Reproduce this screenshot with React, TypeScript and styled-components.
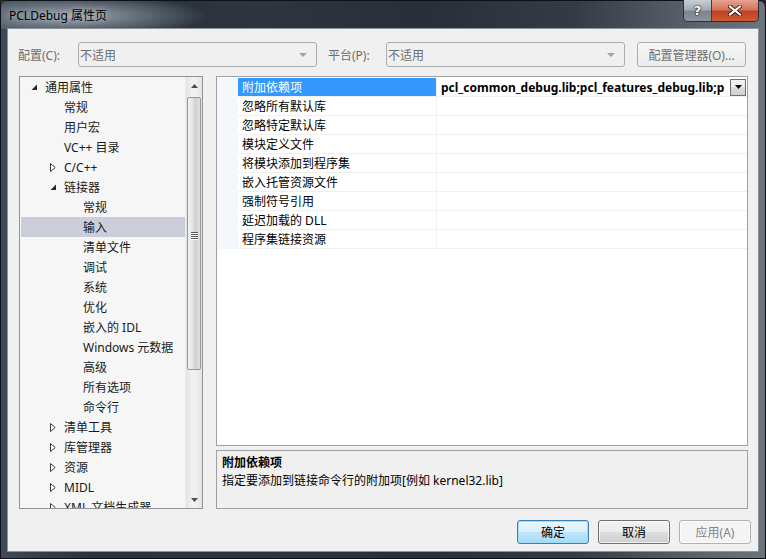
import styled, { createGlobalStyle } from "styled-components";

const GlobalStyle = createGlobalStyle`
  html, body {
    margin: 0;
    padding: 0;
    background: #1f262e;
    overflow: hidden;
  }
  body {
    font-family: "Noto Sans", "Noto Sans CJK SC", sans-serif;
    font-size: 12px;
  }
`;

type TreeItem = {
  label: string;
  level: number;
  exp?: "open" | "closed";
  selected?: boolean;
};

const treeItems: TreeItem[] = [
  { label: "通用属性", level: 0, exp: "open" },
  { label: "常规", level: 1 },
  { label: "用户宏", level: 1 },
  { label: "VC++ 目录", level: 1 },
  { label: "C/C++", level: 1, exp: "closed" },
  { label: "链接器", level: 1, exp: "open" },
  { label: "常规", level: 2 },
  { label: "输入", level: 2, selected: true },
  { label: "清单文件", level: 2 },
  { label: "调试", level: 2 },
  { label: "系统", level: 2 },
  { label: "优化", level: 2 },
  { label: "嵌入的 IDL", level: 2 },
  { label: "Windows 元数据", level: 2 },
  { label: "高级", level: 2 },
  { label: "所有选项", level: 2 },
  { label: "命令行", level: 2 },
  { label: "清单工具", level: 1, exp: "closed" },
  { label: "库管理器", level: 1, exp: "closed" },
  { label: "资源", level: 1, exp: "closed" },
  { label: "MIDL", level: 1, exp: "closed" },
  { label: "XML 文档生成器", level: 1, exp: "closed" },
];

const props = [
  "附加依赖项",
  "忽略所有默认库",
  "忽略特定默认库",
  "模块定义文件",
  "将模块添加到程序集",
  "嵌入托管资源文件",
  "强制符号引用",
  "延迟加载的 DLL",
  "程序集链接资源",
];

const TreeExpander = ({ exp }: { exp?: "open" | "closed" }) => (
  <S.Expander>
    {exp === "open" && (
      <svg width="7" height="7" viewBox="0 0 7 7">
        <polygon points="6,0.5 6,6 0.5,6" fill="#262626" />
      </svg>
    )}
    {exp === "closed" && (
      <svg width="6" height="9" viewBox="0 0 6 9">
        <polygon
          points="0.5,0.5 5.2,4.5 0.5,8.5"
          fill="#fff"
          stroke="#3a3a3a"
          strokeWidth="1"
        />
      </svg>
    )}
  </S.Expander>
);

const ComboArrow = () => (
  <svg width="8" height="4" viewBox="0 0 8 4">
    <polygon points="0,0 8,0 4,4" fill="#a2a2a2" />
  </svg>
);

const App = () => {
  return (
    <>
      <GlobalStyle />
      <S.Window>
        <S.TitleBar>
          <S.Title>PCLDebug 属性页</S.Title>
          <S.Caption>
            <S.HelpBtn>?</S.HelpBtn>
            <S.CloseBtn>
              <svg width="14" height="11" viewBox="0 0 14 11">
                <path
                  d="M2 1.5 L12 9.5 M12 1.5 L2 9.5"
                  stroke="#3a1a14"
                  strokeWidth="4"
                  strokeLinecap="square"
                />
                <path
                  d="M2 1.5 L12 9.5 M12 1.5 L2 9.5"
                  stroke="#fff"
                  strokeWidth="2.2"
                  strokeLinecap="square"
                />
              </svg>
            </S.CloseBtn>
          </S.Caption>
        </S.TitleBar>

        <S.Client>
          <S.Toolbar>
            <S.Label width={60}>配置(C):</S.Label>
            <S.Combo>
              <span>不适用</span>
              <ComboArrow />
            </S.Combo>
            <S.Label width={58} gap={11}>
              平台(P):
            </S.Label>
            <S.Combo>
              <span>不适用</span>
              <ComboArrow />
            </S.Combo>
            <S.ManagerButton>配置管理器(O)...</S.ManagerButton>
          </S.Toolbar>

          <S.Main>
            <S.Tree>
              <S.TreeList>
                {treeItems.map((it, i) => (
                  <S.TreeRow key={i} level={it.level} selected={it.selected}>
                    <TreeExpander exp={it.exp} />
                    <span>{it.label}</span>
                  </S.TreeRow>
                ))}
              </S.TreeList>
              <S.ScrollBar>
                <S.ScrollArrow>
                  <svg width="7" height="4" viewBox="0 0 7 4">
                    <polygon points="0,4 7,4 3.5,0" fill="#4d4d4d" />
                  </svg>
                </S.ScrollArrow>
                <S.Track>
                  <S.Thumb>
                    <S.Grip>
                      <i />
                      <i />
                      <i />
                      <i />
                    </S.Grip>
                  </S.Thumb>
                </S.Track>
                <S.ScrollArrow>
                  <svg width="7" height="4" viewBox="0 0 7 4">
                    <polygon points="0,0 7,0 3.5,4" fill="#4d4d4d" />
                  </svg>
                </S.ScrollArrow>
              </S.ScrollBar>
            </S.Tree>

            <S.RightCol>
              <S.Grid>
                {props.map((p, i) => (
                  <S.GridRow key={i}>
                    <S.Gutter />
                    <S.NameCell selected={i === 0}>{p}</S.NameCell>
                    <S.ValueCell>
                      {i === 0 && (
                        <>
                          <S.ValueText>pcl_common_debug.lib;pcl_features_debug.lib;p</S.ValueText>
                          <S.DropButton>
                            <svg width="7" height="4" viewBox="0 0 7 4">
                              <polygon points="0,0 7,0 3.5,4" fill="#000" />
                            </svg>
                          </S.DropButton>
                        </>
                      )}
                    </S.ValueCell>
                  </S.GridRow>
                ))}
              </S.Grid>
              <S.Description>
                <S.DescTitle>附加依赖项</S.DescTitle>
                <S.DescText>指定要添加到链接命令行的附加项[例如 kernel32.lib]</S.DescText>
              </S.Description>
            </S.RightCol>
          </S.Main>

          <S.Footer>
            <S.Button variant="default">确定</S.Button>
            <S.Button>取消</S.Button>
            <S.Button variant="disabled">应用(A)</S.Button>
          </S.Footer>
        </S.Client>
      </S.Window>
    </>
  );
};

export default App;

const S: any = {};

const Window = styled.div`
  width: 766px;
  height: 559px;
  box-sizing: border-box;
  display: flex;
  flex-direction: column;
  border-radius: 7px 7px 0 0;
  border: 1px solid #0d1116;
  background: linear-gradient(
    90deg,
    #3e4a57 0%,
    #2a333d 12%,
    #2d3640 35%,
    #27303a 55%,
    #333c46 75%,
    #5d656e 92%,
    #6b737b 100%
  );
`;

const TitleBar = styled.div`
  height: 28px;
  display: flex;
  align-items: flex-start;
  background: radial-gradient(
    ellipse 130px 22px at 75px 15px,
    rgba(190, 202, 214, 0.75),
    rgba(190, 202, 214, 0) 100%
  );
`;

const Title = styled.div`
  padding-left: 8px;
  line-height: 29px;
  font-size: 12px;
  color: #000;
  text-shadow: 0 0 6px rgba(255, 255, 255, 0.6);
`;

const Caption = styled.div`
  margin-left: auto;
  margin-right: 6px;
  margin-top: -1px;
  display: flex;
  height: 21px;
  border: 1px solid #2a2f36;
  border-top: none;
  border-radius: 0 0 5px 5px;
  overflow: hidden;
`;

const HelpBtn = styled.div`
  width: 27px;
  display: flex;
  align-items: center;
  justify-content: center;
  font-family: "DejaVu Sans", sans-serif;
  font-weight: bold;
  font-size: 13px;
  color: #fff;
  text-shadow: 0 0 2px #000, 0 0 1px #000;
  border-right: 1px solid #3b4048;
  background: linear-gradient(#c9ced4 0%, #a4abb4 45%, #7d858f 55%, #8c949d 100%);
`;

const CloseBtn = styled.div`
  width: 46px;
  display: flex;
  align-items: center;
  justify-content: center;
  background: linear-gradient(#e5a392 0%, #d6735c 45%, #c2401f 55%, #cc5a36 100%);
`;

const Client = styled.div`
  flex: 1;
  margin: 0 7px 7px 7px;
  background: #f0f0f0;
  box-shadow: 0 0 0 1px #8b949d;
  padding: 13px 10px 0 10px;
  display: flex;
  flex-direction: column;
`;

const Toolbar = styled.div`
  height: 25px;
  display: flex;
  align-items: center;
`;

const Label = styled.div<{ width: number; gap?: number }>`
  width: ${(p) => p.width}px;
  margin-left: ${(p) => p.gap || 0}px;
  color: #6d6d6d;
  font-size: 12px;
`;

const Combo = styled.div`
  width: 239px;
  height: 25px;
  box-sizing: border-box;
  border: 1px solid #acacac;
  border-radius: 3px;
  background: #f0f0f0;
  display: flex;
  align-items: center;
  padding: 0 9px 0 1px;
  color: #6d6d6d;
  span {
    flex: 1;
    padding-top: 1px;
  }
`;

const ManagerButton = styled.div`
  margin-left: 12px;
  width: 109px;
  height: 25px;
  box-sizing: border-box;
  border: 1px solid #adadad;
  border-radius: 3px;
  background: linear-gradient(#f6f6f6, #ececec);
  display: flex;
  align-items: center;
  justify-content: center;
  color: #707070;
`;

const Main = styled.div`
  margin-top: 9px;
  margin-left: 1px;
  height: 433px;
  display: flex;
  gap: 13px;
`;

const Tree = styled.div`
  width: 184px;
  box-sizing: border-box;
  border: 1px solid #8f949b;
  background: #f6f6f6;
  display: flex;
  overflow: hidden;
`;

const TreeList = styled.div`
  flex: 1;
  overflow: hidden;
`;

const TreeRow = styled.div<{ level: number; selected?: boolean }>`
  height: 20px;
  display: flex;
  align-items: center;
  padding-left: ${(p) => 5 + p.level * 19}px;
  margin-left: 1px;
  white-space: nowrap;
  color: #1a1a1a;
  background: ${(p) => (p.selected ? "#cbcddb" : "transparent")};
`;

const Expander = styled.span`
  width: 19px;
  height: 20px;
  display: flex;
  align-items: center;
  padding-left: 5px;
  box-sizing: border-box;
`;

const ScrollBar = styled.div`
  width: 16px;
  display: flex;
  flex-direction: column;
  border-left: 1px solid #ececec;
  background: linear-gradient(90deg, #e3e3e3, #f1f1f1 40%, #f1f1f1 60%, #e3e3e3);
`;

const ScrollArrow = styled.div`
  height: 17px;
  display: flex;
  align-items: center;
  justify-content: center;
`;

const Track = styled.div`
  flex: 1;
  padding-top: 3px;
`;

const Thumb = styled.div`
  margin: 0 1px;
  height: 273px;
  box-sizing: border-box;
  border: 1px solid #979797;
  border-radius: 2px;
  background: linear-gradient(90deg, #f2f2f2, #e2e2e2 45%, #d0d0d0 55%, #dedede);
  display: flex;
  align-items: center;
  justify-content: center;
`;

const Grip = styled.div`
  display: flex;
  flex-direction: column;
  gap: 1px;
  margin-top: 4px;
  i {
    display: block;
    width: 7px;
    height: 1px;
    background: #555;
    box-shadow: 0 1px 0 #fff;
  }
`;

const RightCol = styled.div`
  width: 532px;
  display: flex;
  flex-direction: column;
  gap: 4px;
`;

const Grid = styled.div`
  height: 370px;
  box-sizing: border-box;
  border: 1px solid #a0a0a0;
  background: #fff;
  padding-top: 1px;
  overflow: hidden;
`;

const GridRow = styled.div`
  height: 19px;
  display: flex;
`;

const Gutter = styled.div`
  width: 21px;
  background: #f4f7fc;
`;

const NameCell = styled.div<{ selected?: boolean }>`
  width: 199px;
  box-sizing: border-box;
  padding-left: 4px;
  display: flex;
  align-items: center;
  border-bottom: 1px solid #f0f0f0;
  border-right: 1px solid #f0f0f0;
  color: ${(p) => (p.selected ? "#fff" : "#000")};
  background: ${(p) => (p.selected ? "#3399ff" : "#fff")};
`;

const ValueCell = styled.div`
  flex: 1;
  min-width: 0;
  display: flex;
  align-items: center;
  padding-left: 4px;
  padding-right: 1px;
  border-bottom: 1px solid #f0f0f0;
`;

const ValueText = styled.div`
  flex: 1;
  min-width: 0;
  overflow: hidden;
  white-space: nowrap;
  font-weight: bold;
  color: #000;
`;

const DropButton = styled.div`
  width: 16px;
  height: 17px;
  box-sizing: border-box;
  border: 1px solid #707070;
  background: linear-gradient(#f2f2f2, #ebebeb 50%, #dddddd 50%, #cfcfcf);
  display: flex;
  align-items: center;
  justify-content: center;
`;

const Description = styled.div`
  flex: 1;
  box-sizing: border-box;
  border: 1px solid #a0a0a0;
  background: #f0f0f0;
  padding: 3px 5px;
`;

const DescTitle = styled.div`
  font-weight: bold;
  line-height: 18px;
  color: #000;
`;

const DescText = styled.div`
  line-height: 18px;
  color: #000;
`;

const Footer = styled.div`
  margin-top: 11px;
  margin-right: -3px;
  display: flex;
  justify-content: flex-end;
  gap: 9px;
`;

const Button = styled.div<{ variant?: "default" | "disabled" }>`
  width: 72px;
  height: 24px;
  box-sizing: border-box;
  border-radius: 3px;
  display: flex;
  align-items: center;
  justify-content: center;
  border: 1px solid
    ${(p) =>
      p.variant === "default" ? "#3c7fb1" : p.variant === "disabled" ? "#adb2b5" : "#707070"};
  color: ${(p) => (p.variant === "disabled" ? "#838383" : "#000")};
  background: ${(p) =>
    p.variant === "default"
      ? "linear-gradient(#eaf6fd, #d9f0fc 50%, #bee6fd 50%, #a7d9f5)"
      : p.variant === "disabled"
      ? "#f4f4f4"
      : "linear-gradient(#f2f2f2, #ebebeb 50%, #dddddd 50%, #cfcfcf)"};
  box-shadow: ${(p) =>
    p.variant === "default" ? "inset 0 0 0 1px #9edcf7" : "inset 0 0 0 1px rgba(255,255,255,0.7)"};
`;

S.Window = Window;
S.TitleBar = TitleBar;
S.Title = Title;
S.Caption = Caption;
S.HelpBtn = HelpBtn;
S.CloseBtn = CloseBtn;
S.Client = Client;
S.Toolbar = Toolbar;
S.Label = Label;
S.Combo = Combo;
S.ManagerButton = ManagerButton;
S.Main = Main;
S.Tree = Tree;
S.TreeList = TreeList;
S.TreeRow = TreeRow;
S.Expander = Expander;
S.ScrollBar = ScrollBar;
S.ScrollArrow = ScrollArrow;
S.Track = Track;
S.Thumb = Thumb;
S.Grip = Grip;
S.RightCol = RightCol;
S.Grid = Grid;
S.GridRow = GridRow;
S.Gutter = Gutter;
S.NameCell = NameCell;
S.ValueCell = ValueCell;
S.ValueText = ValueText;
S.DropButton = DropButton;
S.Description = Description;
S.DescTitle = DescTitle;
S.DescText = DescText;
S.Footer = Footer;
S.Button = Button;
